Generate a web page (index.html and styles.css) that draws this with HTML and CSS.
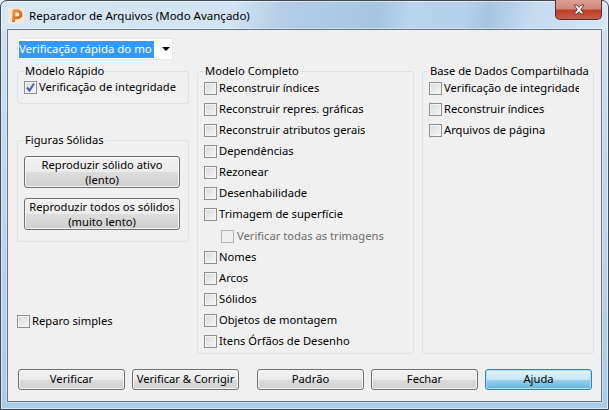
FILE: index.html
```html
<!DOCTYPE html>
<html lang="pt">
<head>
<meta charset="utf-8">
<title>Reparador de Arquivos</title>
<link rel="stylesheet" href="styles.css">
</head>
<body>
<div class="window">
  <div class="titlebar">
    <svg class="app-icon" width="16" height="16" viewBox="0 0 16 16">
      <defs>
        <linearGradient id="pfill" x1="0" y1="0" x2="1" y2="1">
          <stop offset="0" stop-color="#e8954a"/>
          <stop offset="1" stop-color="#b9601a"/>
        </linearGradient>
      </defs>
      <rect width="16" height="16" fill="#fbe6d4"/>
      <path d="M5.500 14L6 3h3.500a3.200 3.200 0 0 1 0 6.800H5.800" fill="none" stroke="url(#pfill)" stroke-width="3"/>
    </svg>
    <span class="title">Reparador de Arquivos (Modo Avançado)</span>
    <div class="close">
      <svg width="14" height="11" viewBox="0 0 14 11">
        <path d="M2 1h3l2 2.300L9 1h3L8.800 5.500 12 10H9L7 7.700 5 10H2l3.200-4.500z" fill="#f4f4f4" stroke="#6b3a38" stroke-width="1"/>
      </svg>
    </div>
  </div>
  <div class="panel">
    <div class="combo"><span class="combo-text">Verificação rápida do mo</span><span class="combo-arrow"></span></div>
    <div class="columns">
      <div class="left">
        <section class="group quick">
          <h2 class="legend">Modelo Rápido</h2>
          <label class="row first"><span class="box checked"><svg width="11" height="11" viewBox="0 0 11 11"><path d="M2 5.500l2.500 3L9 1.500" fill="none" stroke="#4a63ac" stroke-width="2"/></svg></span>Verificação de integridade</label>
        </section>
        <section class="group solids">
          <h2 class="legend">Figuras Sólidas</h2>
          <button class="btn tall">Reproduzir sólido ativo<br>(lento)</button>
          <button class="btn tall">Reproduzir todos os sólidos<br>(muito lento)</button>
        </section>
        <label class="row simple"><span class="box"></span>Reparo simples</label>
      </div>
      <section class="group full">
        <h2 class="legend">Modelo Completo</h2>
        <label class="row first"><span class="box"></span>Reconstruir índices</label>
        <label class="row"><span class="box"></span>Reconstruir repres. gráficas</label>
        <label class="row"><span class="box"></span>Reconstruir atributos gerais</label>
        <label class="row"><span class="box"></span>Dependências</label>
        <label class="row"><span class="box"></span>Rezonear</label>
        <label class="row"><span class="box"></span>Desenhabilidade</label>
        <label class="row"><span class="box"></span>Trimagem de superfície</label>
        <label class="row sub"><span class="box off"></span>Verificar todas as trimagens</label>
        <label class="row"><span class="box"></span>Nomes</label>
        <label class="row"><span class="box"></span>Arcos</label>
        <label class="row"><span class="box"></span>Sólidos</label>
        <label class="row"><span class="box"></span>Objetos de montagem</label>
        <label class="row"><span class="box"></span>Itens Órfãos de Desenho</label>
      </section>
      <section class="group shared">
        <h2 class="legend">Base de Dados Compartilhada</h2>
        <label class="row first"><span class="box"></span><span class="clip-text">Verificação de integridade</span></label>
        <label class="row"><span class="box"></span>Reconstruir índices</label>
        <label class="row"><span class="box"></span>Arquivos de página</label>
      </section>
    </div>
    <div class="actions">
      <button class="btn">Verificar</button>
      <button class="btn">Verificar &amp; Corrigir</button>
      <button class="btn gap">Padrão</button>
      <button class="btn">Fechar</button>
      <button class="btn default">Ajuda</button>
    </div>
  </div>
</div>
</body>
</html>
```
FILE: styles.css
```css
* { box-sizing: border-box; }
html, body { margin: 0; padding: 0; background: #dfe9f3; }
body { width: 609px; height: 410px; overflow: hidden; font-family: "Noto Sans", "Open Sans", sans-serif; font-size: 11.2px; color: #000; }
.window {
  width: 609px; height: 410px;
  padding: 0 6px 7px;
  border: 1px solid #3f4a55; border-radius: 7px 7px 0 0;
  background:
    linear-gradient(100deg, #d6e6f5 0, #d2e3f3 38%, #b4cee6 46%, #a8c5df 62%, #b8d3ea 67%, #b6d1e9 76%, #a8c5df 80%, #c4daef 87%, #d6e6f5 100%) top / 100% 29px no-repeat,
    linear-gradient(180deg, #cfe1f2 0, #bcd6ed 50%, #a9cbe6 100%);
  box-shadow: inset 0 0 0 1px rgba(255,255,255,.55);
}
.titlebar { height: 28px; display: flex; align-items: flex-start; }
.app-icon { margin: 7px 5px 0 1px; flex: none; }
.title { margin-top: 6px; line-height: 18px; font-size: 11.5px; }
.close {
  margin: -1px 0 0 auto; width: 47px; height: 20px;
  display: flex; align-items: center; justify-content: center;
  border: 1px solid #5e2c2a; border-top: 0; border-radius: 0 0 5px 5px;
  background: linear-gradient(180deg, #dca093 0, #d08a7b 45%, #bc3f28 55%, #c8523c 85%, #b5604e 100%);
}
.panel {
  height: 373px; width: 595px;
  border: 1px solid #6c7680;
  background: #f0f0f0;
  padding: 8px 8px 0 9px;
  box-shadow: 0 0 0 1px rgba(255,255,255,.35);
}
.combo {
  width: 156px; height: 22px; background: #fff; border: 1px solid #e3e9ef; border-radius: 2px;
  display: flex; align-items: center; padding-left: 1px;
}
.combo-text { width: 135px; height: 17px; line-height: 16px; background: #3399ff; color: #fff; overflow: hidden; white-space: nowrap; font-size: 11.4px; }
.combo-arrow { margin-left: 8px; width: 0; height: 0; border: 4px solid transparent; border-top: 4px solid #000; border-bottom: 0; }
.columns { display: grid; grid-template-columns: 172px 217px 172px; column-gap: 8px; margin-top: 11px; height: 283px; }
.left { display: flex; flex-direction: column; }
.group { border: 1px solid #dce2e9; border-radius: 3px; position: relative; padding: 0 6px; }
.legend { position: absolute; top: -9px; left: 6px; margin: 0; padding: 0 1px; background: #f0f0f0; font-size: 11.2px; font-weight: 400; line-height: 15px; white-space: nowrap; }
.quick { height: 33px; }
.solids { height: 102px; margin-top: 36px; padding-top: 15px; }
.row { display: flex; align-items: center; height: 21px; white-space: nowrap; padding-bottom: 2px; }
.first { margin-top: 6px; }
.box { flex: none; width: 13px; height: 13px; margin: 2px 2px 0 0; border: 1px solid #8e8f8f; background: linear-gradient(135deg, #d8d9da, #f6f6f6); box-shadow: inset 0 0 0 1px #f4f4f4; display: flex; align-items: center; justify-content: center; }
.quick .first { margin-top: 5px; }
.sub { padding-left: 17px; color: #6d6d6d; height: 22px; }
.box.off { border-color: #b5b5b5; background: #f0f0f0; box-shadow: none; margin-right: 3px; }
.simple { margin-top: 69px; }
.clip-text { width: 135px; overflow: hidden; }
.btn {
  display: block; width: 156px; padding: 0; font: inherit; color: #000;
  border: 1px solid #707070; border-radius: 3px;
  background: linear-gradient(180deg, #f2f2f2 0, #ebebeb 50%, #dddddd 50%, #cfcfcf 100%);
  box-shadow: inset 0 0 0 1px #f5f5f5;
  line-height: 15px;
  white-space: nowrap;
}
.tall { height: 32px; margin-bottom: 10px; }
.actions { display: flex; margin: 15px 0 0 1px; }
.actions .btn { width: 107px; height: 21px; margin-right: 7px; flex: none; line-height: 17px; padding-bottom: 2px; }
.actions .gap { margin-left: 11px; }
.actions .default {
  margin-right: 0; border-color: #3c7fb1;
  background: linear-gradient(180deg, #e5f4fc 0, #c4e5f6 50%, #98d1ef 50%, #68b3db 100%);
  box-shadow: inset 0 0 0 1px #a7e0f8;
}
```
